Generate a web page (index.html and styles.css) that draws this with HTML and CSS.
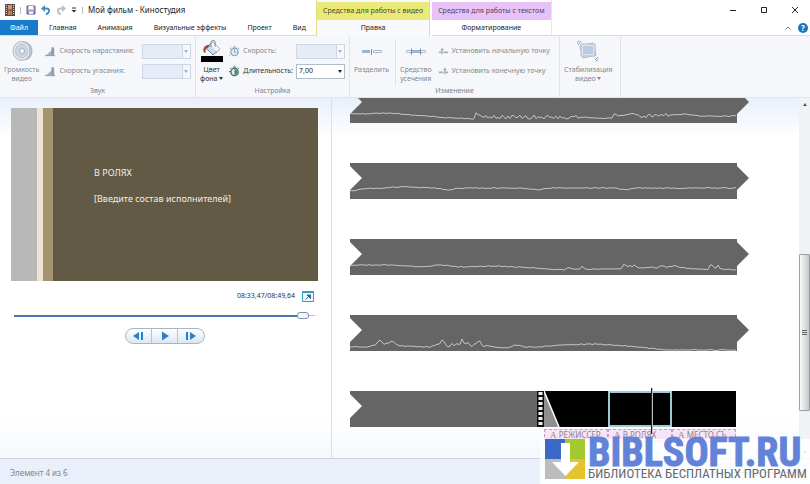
FILE: index.html
```html
<!DOCTYPE html>
<html lang="ru">
<head>
<meta charset="utf-8">
<title>Мой фильм - Киностудия</title>
<link rel="stylesheet" href="styles.css">
</head>
<body>
<header class="header">
  <div class="header-main">
    <div class="quick">
      <svg class="app-icon" viewBox="0 0 10 12"><rect width="10" height="12" fill="#5b4a42"/><rect x="3" y="1" width="4" height="4.5" fill="#d9946b"/><rect x="3" y="6.5" width="4" height="4.5" fill="#b87d5c"/><path d="M1.4 1v10M8.6 1v10" stroke="#e8e0d8" stroke-width="1" stroke-dasharray="1 1"/></svg>
      <span class="bar"></span>
      <button aria-label="Сохранить"><svg viewBox="0 0 10 10"><path d="M1 1h8v8H1z" fill="#a79bc9" stroke="#5f5590"/><path d="M2.500 1h5v3.500h-5z" fill="#fff"/><path d="M3 6.500h4V9H3z" fill="#ecebf5"/></svg></button>
      <button aria-label="Отменить"><svg viewBox="0 0 10 10"><path d="M1.500 3.500H5.500Q8.500 3.500 8 6.500Q7.500 8.500 5 9.500" fill="none" stroke="#3f8fc0" stroke-width="2"/><path d="M0 3.500L4 0v7z" fill="#3f8fc0"/></svg></button>
      <button aria-label="Вернуть"><svg viewBox="0 0 10 10"><path d="M8.500 3.500H4.500Q1.500 3.500 2 6.500Q2.500 8.500 5 9.500" fill="none" stroke="#b9c0c8" stroke-width="2"/><path d="M10 3.500L6 0v7z" fill="#b9c0c8"/></svg></button>
      <button class="more" aria-label="Настройка панели"><svg viewBox="0 0 6 6"><path d="M1 1h4" stroke="#333"/><path d="M0.500 3h5L3 5.500z" fill="#333"/></svg></button>
      <span class="bar"></span>
      <h1>Мой фильм - Киностудия</h1>
    </div>
    <nav class="tabs">
      <button class="tab file">Файл</button>
      <button class="tab">Главная</button>
      <button class="tab">Анимация</button>
      <button class="tab">Визуальные эффекты</button>
      <button class="tab">Проект</button>
      <button class="tab">Вид</button>
    </nav>
  </div>
  <div class="context video">
    <div class="context-title">Средства для работы с видео</div>
    <button class="tab active">Правка</button>
  </div>
  <div class="context text">
    <div class="context-title">Средства для работы с текстом</div>
    <button class="tab">Форматирование</button>
  </div>
  <div class="window">
    <div class="window-buttons">
      <button aria-label="Свернуть"><svg viewBox="0 0 8 8"><path d="M1 4.500h6" stroke="#222"/></svg></button>
      <button aria-label="Развернуть"><svg viewBox="0 0 8 8"><path d="M1.500 1.500h5v5h-5z" fill="none" stroke="#222"/></svg></button>
      <button aria-label="Закрыть"><svg viewBox="0 0 8 8"><path d="M1 1l6 6M7 1L1 7" stroke="#222"/></svg></button>
    </div>
    <div class="help-buttons">
      <button aria-label="Свернуть ленту"><svg viewBox="0 0 8 8"><path d="M1.500 5.500L4 3l2.500 2.500" fill="none" stroke="#777"/></svg></button>
      <button class="help" aria-label="Справка">?</button>
    </div>
  </div>
</header>

<section class="ribbon">
  <div class="group sound">
    <div class="tools">
      <button class="big off"><svg class="icon" viewBox="0 0 22 22"><path d="M12 1.500Q21 3 21 11T13 20z" fill="#bcc6d6" stroke="#a9b2c0"/><ellipse cx="10.500" cy="11" rx="8.500" ry="9.500" fill="#e3e8ef" stroke="#b0b9c6"/><ellipse cx="10.500" cy="11" rx="6" ry="7" fill="#cdd6e3" stroke="#bac4d3"/><ellipse cx="11" cy="11" rx="2.500" ry="3" fill="#edf1f7" stroke="#9fb0c8"/></svg><span>Громкость<br>видео</span></button>
      <div class="rows">
        <div class="row off"><svg class="small" viewBox="0 0 12 12"><path d="M1 10L8 4v6z" fill="#a7b5c6"/><path d="M7 1l3 1v8H7z" fill="#8b9cb3"/><path d="M0 10.500h11" stroke="#8492a8"/></svg><label for="fade-in">Скорость нарастания:</label><span class="combo"><select id="fade-in" disabled><option></option></select></span></div>
        <div class="row off"><svg class="small" viewBox="0 0 12 12"><path d="M1 10L8 4v6z" fill="#a7b5c6"/><path d="M7 1l3 1v8H7z" fill="#8b9cb3"/><path d="M0 10.500h11" stroke="#8492a8"/></svg><label for="fade-out">Скорость угасания:</label><span class="combo"><select id="fade-out" disabled><option></option></select></span></div>
      </div>
    </div>
    <div class="group-name">Звук</div>
  </div>
  <div class="group settings">
    <div class="tools">
      <button class="big"><svg class="icon" viewBox="0 0 22 22"><path d="M5 8L12 2l7 7-7 6z" fill="#c9dced" stroke="#6d8298"/><path d="M12 2l7 7-3 2.500L9 5z" fill="#f2f7fb"/><path d="M2.500 12Q1 5 9 4.500L7 8Q4 8 4.500 13z" fill="#9c4a3c"/><path d="M10 7Q9 1 12 .500t2 6" fill="none" stroke="#6d8298"/><path d="M0 16h22v6H0z" fill="#000"/></svg><span>Цвет<br>фона <i class="caret"></i></span></button>
      <div class="rows">
        <div class="row off"><svg class="small" viewBox="0 0 12 12"><circle cx="6" cy="6.500" r="4" fill="#e8f0f5" stroke="#8fa6b5" stroke-width="1.500"/><path d="M6 4v3h2M4.500 1h3M1 3l1.500-1M11 3L9.500 2M1 10H0" fill="none" stroke="#7f9aaa"/></svg><label for="speed">Скорость:</label><span class="combo"><select id="speed" disabled><option></option></select></span></div>
        <div class="row"><svg class="small" viewBox="0 0 12 12"><circle cx="6" cy="6.500" r="4" fill="#dfeee6" stroke="#52665f" stroke-width="1.500"/><path d="M6 6.500V3.500A3 3 0 0 1 6 9.500z" fill="#359268"/><path d="M4.500 1h3M1 3l1.500-1M11 3L9.500 2M0 6h2" fill="none" stroke="#52665f"/></svg><label for="length">Длительность:</label><span class="combo"><select id="length"><option>7,00</option></select></span></div>
      </div>
    </div>
    <div class="group-name">Настройка</div>
  </div>
  <div class="group change">
    <div class="tools">
      <button class="big off"><svg class="icon" viewBox="0 0 22 22"><path d="M1 10h8v3H1z" fill="#9fb3cc"/><path d="M10.500 9v6" stroke="#788da8"/><path d="M12.500 10.500h8v2h-8z" fill="#fff" stroke="#a9b8ca"/></svg><span>Разделить</span></button>
      <button class="big off trim"><svg class="icon" viewBox="0 0 22 22"><path d="M1.500 10.500h19v2h-19z" fill="#fff" stroke="#a9b8ca"/><path d="M7 10h8v3H7z" fill="#9fb3cc"/><path d="M6.500 8.500v6M15.500 8.500v6" stroke="#788da8"/></svg><span>Средство<br>усечения</span></button>
      <div class="rows">
        <button class="row off"><svg class="small" viewBox="0 0 12 12"><path d="M1 7h3M6 7h5" stroke="#a5b0be" stroke-width="2"/><path d="M4.500 2v7M3 4h3" stroke="#8796aa"/></svg><span>Установить начальную точку</span></button>
        <button class="row off"><svg class="small" viewBox="0 0 12 12"><path d="M1 7h5M8 7h3" stroke="#a5b0be" stroke-width="2"/><path d="M7.500 2v7M6 4h3" stroke="#8796aa"/></svg><span>Установить конечную точку</span></button>
      </div>
    </div>
    <div class="group-name">Изменение</div>
  </div>
  <div class="group stabil">
    <div class="tools">
      <button class="big off"><svg class="icon" viewBox="0 0 22 22"><path d="M3 6l13-3 3 12-13 3z" fill="#f3f6f9" stroke="#aab8c8"/><path d="M4 4h14v12H4z" fill="#dce6f1" stroke="#aab8c8"/><path d="M6 6h10v8H6z" fill="#b9cce1"/><path d="M1 5l3-4M0 3l2-2.500M18 20l3-3M19 21.500l2.500-2.500" stroke="#8d98a6"/></svg><span>Стабилизация<br>видео <i class="caret"></i></span></button>
    </div>
  </div>
</section>

<main class="work">
  <section class="preview">
    <div class="screen">
      <div class="stripe gray"></div><div class="stripe cream"></div><div class="stripe tan"></div>
      <div class="credits"><p>В РОЛЯХ</p><p>[Введите состав исполнителей]</p></div>
    </div>
    <div class="time"><span>08:33,47/08:49,64</span><button aria-label="Во весь экран"><svg viewBox="0 0 12 11"><path d="M.500 .500h11v10H.500z" fill="#eef8fb" stroke="#3a9cb8"/><path d="M0 1h12" stroke="#3a9cb8" stroke-width="2"/><path d="M3.500 8.500l4-4M5 4h3.500v3.500z" stroke="#256f94" fill="#256f94"/></svg></button></div>
    <input class="seek" type="range" min="0" max="100" value="98" aria-label="Позиция воспроизведения">
    <div class="player">
      <button aria-label="Предыдущий кадр"><svg viewBox="0 0 12 10"><path d="M7 1v8L1 5z" fill="#2b7fc6"/><path d="M10 1v8" stroke="#2b7fc6" stroke-width="2"/></svg></button>
      <button aria-label="Воспроизвести"><svg viewBox="0 0 12 10"><path d="M3 .500v9L10 5z" fill="#2b7fc6"/></svg></button>
      <button aria-label="Следующий кадр"><svg viewBox="0 0 12 10"><path d="M5 1v8l6-4z" fill="#2b7fc6"/><path d="M2 1v8" stroke="#2b7fc6" stroke-width="2"/></svg></button>
    </div>
  </section>
  <section class="timeline">
    <div class="strips">
      <svg class="strip" viewBox="0 0 399 36"><path class="body" d="M0 0h387v3l12 12-12 12v9H0v-9l12-12L0 3z"/><path class="wave"/></svg>
      <svg class="strip" viewBox="0 0 399 36"><path class="body" d="M0 0h387v3l12 12-12 12v9H0v-9l12-12L0 3z"/><path class="wave"/></svg>
      <svg class="strip" viewBox="0 0 399 36"><path class="body" d="M0 0h387v3l12 12-12 12v9H0v-9l12-12L0 3z"/><path class="wave"/></svg>
      <svg class="strip" viewBox="0 0 399 36"><path class="body" d="M0 0h387v3l12 12-12 12v9H0v-9l12-12L0 3z"/><path class="wave"/></svg>
      <div class="last">
        <svg class="tail" viewBox="0 0 194 36"><path class="body" d="M0 0h187v36H0v-9l12-12L0 3z"/><path d="M187 0h7v36h-7z" fill="#111"/><path d="M190.500 1v34" stroke="#e9f2f2" stroke-width="4" stroke-dasharray="3 2"/></svg>
        <div class="clip"><div class="frame"><svg viewBox="0 0 16 36"><path d="M0 0l15 36H0z" fill="#8f8f8f"/><path d="M0 0l15 36" stroke="#fff" stroke-width="1.500"/></svg></div><div class="caption"><b>A</b> РЕЖИССЕР</div></div>
        <div class="clip selected"><div class="frame"></div><div class="caption"><b>A</b> В РОЛЯХ</div><div class="playhead"></div></div>
        <div class="clip"><div class="frame"></div><div class="caption"><b>A</b> МЕСТО СЪ...</div></div>
      </div>
    </div>
    <div class="scroll"><i class="up"></i><div class="thumb"><i></i></div><i class="down"></i></div>
  </section>
</main>
<footer class="status"><span>Элемент 4 из 6</span><input class="scale" type="range" aria-label="Масштаб"></footer>

<aside class="brand">
  <svg class="brand-logo" viewBox="0 0 40 40"><path d="M0 0h20v20H0z" fill="#3c68c8"/><path d="M20 0h20v20H20z" fill="#a3c92e"/><path d="M0 20h20v20H0z" fill="#babcbe"/><path d="M20 20h20v20H20z" fill="#e5c32f"/><path d="M16 4h9v19h9L20.500 37 7 23h9z" fill="#fff"/></svg>
  <div><div class="brand-name">BIBLSOFT.RU</div><div class="brand-line">БИБЛИОТЕКА БЕСПЛАТНЫХ ПРОГРАММ</div></div>
</aside>
<script src="waves.js"></script>
</body>
</html>
```
FILE: styles.css
```css
* { box-sizing: border-box; }
body {
  margin: 0;
  min-height: 100vh;
  display: flex;
  flex-direction: column;
  position: relative;
  background: #fff;
  color: #333;
  font: 8px/10px "Noto Sans", "Open Sans", sans-serif;
}
button, select { font: inherit; color: inherit; }
button { border: 0; padding: 0; background: none; }
svg { display: block; }
h1, p { margin: 0; font: inherit; }

.header { display: flex; height: 36px; }
.header-main { display: flex; flex-direction: column; border-bottom: 1px solid #e3e3a0; }
.quick { height: 20px; display: flex; align-items: center; gap: 5px; padding-left: 5px; }
.quick svg { width: 10px; height: 10px; }
.quick .app-icon { height: 12px; }
.quick .more svg { width: 6px; height: 6px; }
.quick h1 { color: #222; }
.bar { width: 1px; height: 7px; background: #bbb; }
.tabs { flex: 1; display: flex; gap: 1px; }
.tab { padding: 0 10px; color: #222; white-space: nowrap; font-size: 7px; }
.tab.file { background: #1979ca; color: #fff; }
.context { padding-top: 2px; display: flex; flex-direction: column; border-bottom: 1px solid #e3e3a0; }
.context-title { height: 18px; line-height: 18px; padding: 0 6px; font-size: 7px; white-space: nowrap; }
.context .tab { flex: 1; }
.video { border: solid #e0df86; border-width: 0 1px; background: #f7f9fc; }
.video .context-title { background: #e9ea78; color: #4b4b2c; }
.text { margin-left: 2px; border-right: 1px solid #e6e6e6; }
.text .context-title { background: #e7c3f5; color: #55406a; }
.window { flex: 1; display: flex; flex-direction: column; align-items: flex-end; border-bottom: 1px solid #e3e3a0; }
.window svg { width: 8px; height: 8px; }
.window-buttons { height: 20px; display: flex; align-items: center; gap: 23px; padding-right: 11px; }
.help-buttons { flex: 1; display: flex; align-items: center; gap: 6px; padding-right: 2px; }
.help { width: 10px; height: 10px; border-radius: 5px; background: #1b75bb; color: #fff; font-weight: bold; }

.ribbon { display: flex; height: 62px; background: #f5f7fa; border-bottom: 1px solid #dfe4ec; font-size: 7px; }
.group { display: flex; flex-direction: column; border-right: 1px solid #e0e4ea; padding: 4px 4px 1px; }
.sound { width: 196px; }
.settings { width: 154px; }
.change { width: 210px; }
.stabil { width: 61px; }
.tools { flex: 1; display: flex; gap: 6px; }
.group-name { text-align: center; color: #7d838b; }
.big { display: flex; flex-direction: column; align-items: center; line-height: 9px; white-space: nowrap; flex: none; }
.icon { width: 22px; height: 22px; margin-bottom: 3px; }
.off { color: #84898f; }
.trim { border-left: 1px solid #e0e4ea; padding-left: 4px; }
.rows { flex: 1; display: flex; flex-direction: column; gap: 4px; padding-top: 3px; }
.row { display: flex; align-items: center; gap: 3px; height: 16px; white-space: nowrap; }
.row .combo { margin-left: auto; }
.small { width: 11px; height: 11px; flex: none; }
.combo { position: relative; width: 49px; height: 15px; }
.combo select { appearance: none; width: 100%; height: 100%; border: 1px solid #b4bcc8; border-radius: 0; background: #fff; padding: 0 2px; color: #222; }
.combo select:disabled { border-color: #ccd6e4; background: linear-gradient(90deg, #e6ecf6 39px, #ccd6e4 39px, #ccd6e4 40px, #f5f7fa 40px); opacity: 1; }
.combo::after { content: ""; position: absolute; right: 3px; top: 6px; border: 2px solid transparent; border-top: 3px solid #222; border-bottom: 0; }
.off .combo::after { border-top-color: #a9afb8; }
.caret { display: inline-block; border: 2px solid transparent; border-top: 3px solid currentColor; border-bottom: 0; vertical-align: 1px; }

.work { flex: 1; display: flex; min-height: 0; background: linear-gradient(#e9effb, #fff 40px, #fff 320px, #f4f8fc); }
.preview { flex: 0 0 41%; padding: 10px 13px 0 11px; border-right: 1px solid #dedfe3; }
.screen { height: 173px; display: flex; background: #625a44; }
.stripe.gray { width: 26px; background: #b8b8b9; }
.stripe.cream { width: 6px; background: #efe3d6; }
.stripe.tan { width: 10px; background: #a39570; }
.credits { padding: 59px 0 0 41px; color: #f1eee5; font-size: 9px; line-height: 12px; }
.credits p { margin-bottom: 14px; }
.time { height: 30px; display: flex; align-items: center; justify-content: flex-end; gap: 7px; padding-right: 4px; color: #333; font-size: 7px; }
.time svg { width: 12px; height: 11px; }
.seek { appearance: none; display: block; width: 100%; height: 9px; margin: 0; padding: 0 3px; background: linear-gradient(#4d78b4, #4d78b4) 3px 4px / 287px 2px no-repeat, linear-gradient(#b9bec8, #b9bec8) 3px 4px / 301px 1px no-repeat; }
.seek::-webkit-slider-thumb { appearance: none; width: 12px; height: 7px; border: 1px solid #8494a8; border-radius: 3px; background: #f4f6f8; }
.player { width: 80px; height: 16px; margin: 8px auto 0; display: flex; border: 1px solid #a9b5c4; border-radius: 8px; background: linear-gradient(#fdfeff, #dce7f2); overflow: hidden; }
.player button { flex: 1; display: flex; align-items: center; justify-content: center; }
.player button + button { border-left: 1px solid #b8c3d1; }
.player svg { width: 12px; height: 10px; }

.timeline { flex: 1; display: flex; justify-content: space-between; padding-left: 18px; min-width: 0; }
.strips { height: 360px; overflow: hidden; display: flex; flex-direction: column; justify-content: flex-end; gap: 40px; padding-bottom: 15px; }
.strip { width: 399px; height: 36px; flex: none; }
.body { fill: #656565; }
.wave { fill: none; stroke: #c4c4c4; stroke-width: 1; }
.last { display: flex; flex: none; height: 52px; }
.tail { width: 194px; height: 36px; }
.clip { position: relative; width: 64px; }
.frame { height: 36px; background: #000; }
.frame svg { width: 16px; height: 36px; }
.selected .frame { border: 2px solid #9cc9d6; }
.caption { height: 13px; margin-top: 2px; border: 1px dashed #c99bc6; background: #f8e4f7; color: #8d8290; padding-left: 5px; line-height: 9px; overflow: hidden; white-space: nowrap; }
.caption b { font: 9px/9px "Liberation Serif", serif; }
.playhead { position: absolute; left: 43px; top: -3px; width: 2px; height: 46px; background: #222; border-right: 1px solid #bbb; }
.scroll { width: 11px; display: flex; flex-direction: column; align-items: center; background: #f1f2f5; padding: 5px 0 4px; }
.up { border: 2px solid transparent; border-bottom: 3px solid #555; border-top: 0; }
.down { border: 2px solid transparent; border-top: 3px solid #999; border-bottom: 0; margin-top: auto; }
.thumb { width: 11px; height: 157px; margin-top: 148px; display: flex; align-items: center; justify-content: center; border: 1px solid #9b9ea4; border-radius: 1px; background: linear-gradient(90deg, #fafafa, #c4c7cb); }
.thumb i { width: 5px; height: 5px; background: repeating-linear-gradient(#666 0 1px, #ddd 1px 2px); }
.status { height: 26px; display: flex; align-items: center; justify-content: space-between; padding: 2px 10px 0; border-top: 1px solid #cdd3de; background: #e9f0fa; color: #7b8490; }
.scale { appearance: none; width: 90px; height: 9px; margin: 0; background: linear-gradient(#7fa9c4, #7fa9c4) 0 4px / 100% 1px no-repeat; }
.scale::-webkit-slider-thumb { appearance: none; width: 8px; height: 7px; border: 1px solid #8494a8; border-radius: 3px; background: #f4f6f8; }

.brand { position: absolute; right: 0; bottom: 0; width: 270px; height: 45px; display: flex; gap: 3px; padding-left: 5px; background: rgba(255, 255, 255, 0.82); }
.brand-logo { width: 40px; height: 40px; flex: none; }
.brand-name { font: bold 40px/28px "Roboto Condensed", "Liberation Sans Narrow", sans-serif; color: #6283d8; -webkit-text-stroke: 1px #6283d8; white-space: nowrap; }
.brand-line { font: 13px/14px "Roboto Condensed", "Liberation Sans Narrow", sans-serif; color: #66686b; white-space: nowrap; }
```
FILE: waves.js
```js
// Each strip: key points [x, y] of its sound level, and stretches with peaks.
const levels = [
  { points: [[0, 27], [40, 26], [60, 28], [100, 31], [125, 32], [126, 26], [133, 30], [230, 30], [245, 31], [262, 31], [263, 26], [268, 29], [283, 27], [290, 29], [315, 28], [335, 27], [350, 29], [387, 29]], peaks: [[133, 230], [268, 320]] },
  { points: [[0, 28], [12, 26], [50, 24], [85, 25], [98, 27], [110, 25], [170, 25], [187, 27], [200, 25], [265, 25], [275, 27], [285, 25], [387, 25]], peaks: [] },
  { points: [[0, 26], [40, 26], [70, 28], [90, 26], [110, 28], [140, 27], [170, 28], [200, 30], [215, 31], [217, 28], [222, 30], [230, 30], [232, 27], [235, 30], [271, 30], [274, 26], [282, 26], [290, 29], [306, 28], [312, 26], [323, 28], [325, 25], [327, 28], [345, 30], [357, 30], [361, 26], [368, 28], [370, 30], [387, 31]], peaks: [[270, 285], [305, 320], [356, 370]] },
  { points: [[0, 32], [15, 32], [25, 30], [31, 26], [37, 30], [42, 28], [50, 31], [80, 32], [90, 28], [93, 26], [98, 30], [108, 30], [112, 26], [122, 30], [127, 26], [133, 30], [145, 32], [158, 33], [165, 30], [175, 32], [190, 32], [210, 30], [245, 29], [290, 32], [308, 34], [325, 35], [387, 35]], peaks: [[26, 45], [88, 135]] }
];

document.querySelectorAll(".wave").forEach((path, n) => {
  const { points, peaks } = levels[n];
  let d = "";
  let k = 0;
  for (let x = 0; x <= 386; x += 2) {
    while (k < points.length - 2 && points[k + 1][0] < x) k++;
    const [x0, y0] = points[k];
    const [x1, y1] = points[k + 1];
    const inPeak = peaks.some(([a, b]) => x > a && x < b);
    const base = y0 + (y1 - y0) * (x - x0) / (x1 - x0);
    const noise = Math.sin((x + n * 7) * 12.9898) * 43758.5453;
    const y = base + (noise - Math.floor(noise) - 0.5) * (inPeak ? 4 : 1);
    d += (x ? "L" : "M") + x + " " + Math.min(35.5, y).toFixed(1);
  }
  path.setAttribute("d", d);
});
```
